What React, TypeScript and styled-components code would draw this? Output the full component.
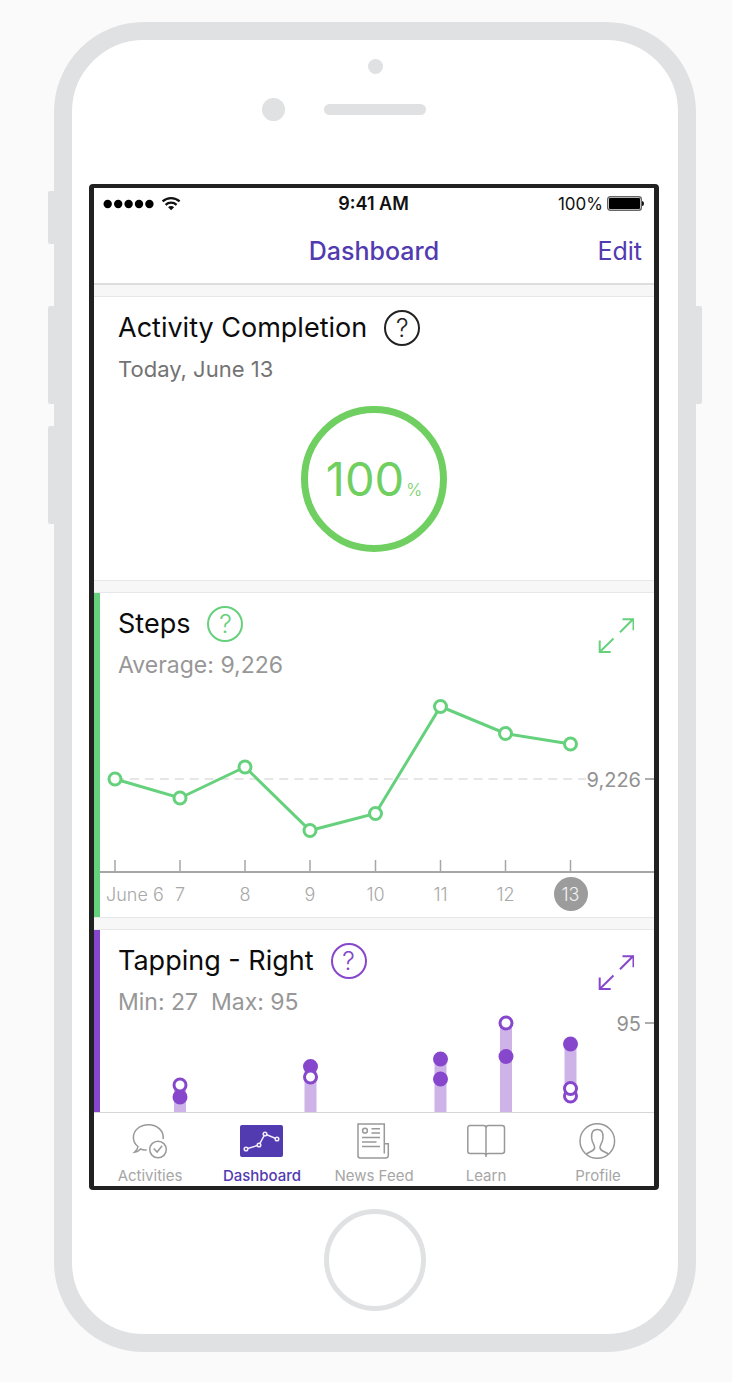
import React from "react";
import styled, { createGlobalStyle } from "styled-components";

const Global = createGlobalStyle`
  * { box-sizing: border-box; }
  body { margin: 0; background: #fafafa; font-family: Inter, "Liberation Sans", sans-serif; }
  h1, h2, p { margin: 0; font-weight: 400; }
  button { padding: 0; border: 0; background: none; font: inherit; color: inherit; cursor: pointer; }
  svg { display: block; }
`;

const shell = "#e0e1e3";
const violet = "#523bb0";
const green = "#66d17c";
const purple = "#8647cc";

const Stage = styled.main`
  display: flex;
  padding: 22px 30px 30px 48px;
`;

const Rail = styled.div`
  width: 6px;
  flex: none;
  display: flex;
  flex-direction: column;
`;

const SideKey = styled.span<{ $gap: number; $size: number; $right?: boolean }>`
  height: ${(p) => p.$size}px;
  margin-top: ${(p) => p.$gap}px;
  background: ${shell};
  border-radius: ${(p) => (p.$right ? "0 2px 2px 0" : "2px 0 0 2px")};
`;

const Body = styled.div`
  flex: 1;
  min-width: 0;
  display: flex;
  flex-direction: column;
  padding-bottom: 23px;
  border: 18px solid ${shell};
  border-radius: 90px;
  background: #fff;
`;

const Earpiece = styled.div`
  height: 144px;
  padding-top: 19px;
  display: flex;
  flex-direction: column;
  align-items: center;
  gap: 24px;
`;

const Dot = styled.span<{ $size: number }>`
  width: ${(p) => p.$size}px;
  height: ${(p) => p.$size}px;
  border-radius: 50%;
  background: ${shell};
`;

const SpeakerRow = styled.div`
  width: 100%;
  display: grid;
  grid-template-columns: 1fr 102px 1fr;
  align-items: center;
`;

const CameraSlot = styled.div`
  display: flex;
  justify-content: flex-end;
  padding-right: 39px;
`;

const Speaker = styled.span`
  height: 11px;
  border-radius: 6px;
  background: ${shell};
`;

const Screen = styled.div`
  display: flex;
  flex-direction: column;
  margin: 0 19px 0 17px;
  border: solid #212121;
  border-width: 4px 5px;
  border-radius: 4px;
  background: #fff;
`;

const StatusBar = styled.div`
  height: 31px;
  display: grid;
  grid-template-columns: 1fr auto 1fr;
  align-items: center;
  padding: 0 10px 0 9px;
  font-size: 17px;
  color: #111;
`;

const Clock = styled.time`
  font-size: 18px;
  font-weight: 600;
`;

const Battery = styled.span`
  display: flex;
  align-items: center;
  justify-content: flex-end;
  gap: 4px;
`;

const NavBar = styled.header`
  height: 66px;
  display: grid;
  grid-template-columns: 1fr auto 1fr;
  align-items: center;
  padding: 0 12px;
  border-bottom: 2px solid #dedee0;
  color: ${violet};
  font-size: 25px;
`;

const NavTitle = styled.h1`
  grid-column: 2;
  font-size: 25px;
  font-weight: 500;
`;

const EditButton = styled.button`
  justify-self: end;
`;

const Feed = styled.div`
  display: flex;
  flex-direction: column;
  gap: 11px;
  padding-top: 11px;
  background: #f7f7f7;
`;

const Card = styled.section<{ $accent?: string; $last?: boolean }>`
  border-top: 1px solid #e7e7e8;
  border-bottom: ${(p) => (p.$last ? "0" : "1px solid #e7e7e8")};
  background-color: #fff;
  padding-left: ${(p) => (p.$accent ? 6 : 0)}px;
  background-image: ${(p) => (p.$accent ? `linear-gradient(${p.$accent}, ${p.$accent})` : "none")};
  background-size: 6px 100%;
  background-repeat: no-repeat;
`;

const CardHead = styled.div<{ $accent?: string }>`
  display: flex;
  justify-content: space-between;
  padding: 13px 20px 0 ${(p) => (p.$accent ? 18 : 24)}px;
  color: ${(p) => p.$accent || "#222"};
`;

const TitleRow = styled.div`
  display: flex;
  align-items: center;
  gap: 17px;
`;

const CardTitle = styled.h2`
  font-size: 27px;
  line-height: 36px;
  color: #0c0c0c;
`;

const HelpButton = styled.button`
  width: 36px;
  height: 36px;
  border: 2px solid currentColor;
  border-radius: 50%;
  font-size: 25px;
  font-weight: 300;
  line-height: 32px;
`;

const Caption = styled.p<{ $dark?: boolean }>`
  margin-top: 9px;
  font-size: ${(p) => (p.$dark ? 22 : 23)}px;
  line-height: 28px;
  white-space: pre;
  color: ${(p) => (p.$dark ? "#737373" : "#979797")};
`;

const ExpandButton = styled.button`
  width: 36px;
  height: 36px;
  margin-top: 11px;
`;

const RingArea = styled.div`
  display: flex;
  justify-content: center;
  padding: 23px 0 28px;
`;

const Ring = styled.div`
  width: 146px;
  height: 146px;
  display: flex;
  justify-content: center;
  align-items: baseline;
  gap: 2px;
  border: 7px solid #6fcf60;
  border-radius: 50%;
  color: #6fcf60;
  line-height: 132px;
`;

const RingValue = styled.span`
  font-size: 47px;
`;

const RingUnit = styled.span`
  font-size: 17px;
  font-weight: 300;
`;

const Chart = styled.svg`
  width: 100%;
  height: auto;
  overflow: visible;
`;

const ScaleText = styled.text`
  font-size: 20px;
  fill: #929292;
`;

const DayText = styled.text<{ $on?: boolean }>`
  font-size: 18px;
  font-weight: 300;
  fill: ${(p) => (p.$on ? "#f2f2f2" : "#a8a8a8")};
`;

const TabBar = styled.nav`
  display: grid;
  grid-template-columns: repeat(5, 1fr);
  height: 74px;
  border-top: 1px solid #d6d6d6;
  padding-top: 10px;
`;

const Tab = styled.button<{ $active?: boolean }>`
  display: flex;
  flex-direction: column;
  align-items: center;
  gap: 8px;
  font-size: 15px;
  line-height: 18px;
  font-weight: ${(p) => (p.$active ? 500 : 400)};
  color: ${(p) => (p.$active ? violet : "#a6a6a6")};
`;

const HomeArea = styled.div`
  display: flex;
  justify-content: center;
  padding-top: 19px;
`;

const HomeButton = styled.button`
  width: 102px;
  height: 102px;
  border: 5px solid ${shell};
  border-radius: 50%;
`;

const Signal = () => (
  <svg width="78" height="16" viewBox="0 0 78 16" role="img" aria-label="Signal">
    {[4.7, 15.2, 25.6, 36, 46.4].map((x) => (
      <circle key={x} cx={x} cy="8" r="4.2" fill="#000" />
    ))}
    <g fill="none" stroke="#111" strokeWidth="2.2">
      <path d="M59.600 5.400a12.500 12.500 0 0 1 17 0" />
      <path d="M62.600 8.900a8 8 0 0 1 11 0" />
    </g>
    <path d="M68.100 14.200l-3-3a4.200 4.200 0 0 1 6 0z" fill="#111" />
  </svg>
);

const BatteryIcon = () => (
  <svg width="37" height="15" viewBox="0 0 37 15" aria-hidden="true">
    <rect x="0.7" y="0.7" width="33.600" height="13.600" rx="2.500" fill="#fff" stroke="#666" strokeWidth="1.400" />
    <rect x="2" y="2" width="31" height="11" rx="1" fill="#000" />
    <path d="M35 5q2 0 2 2.500t-2 2.500z" fill="#111" />
  </svg>
);

const ExpandIcon = () => (
  <svg width="36" height="36" viewBox="0 0 36 36" fill="none" stroke="currentColor" strokeWidth="2" aria-hidden="true">
    <path d="M22 15.200L35.500 1.800M24.500 2.200h11v11M15.500 21.500L1.700 35M1.700 23.500v11.500h11" />
  </svg>
);

const ActivitiesIcon = () => (
  <svg width="44" height="36" viewBox="0 0 44 36" fill="none" stroke="#999" strokeWidth="1.500" aria-hidden="true">
    <path d="M35.200 16C36 8 29.500 1.700 20.500 1.700C11.500 1.700 5.400 7.500 5.400 14.500c0 4 1.800 7 4.600 9-.2 2-1.500 4-3.500 5.800 2.800-.3 4.600-1.600 6-3.300 2 .9 4 1.200 6.200.7" />
    <circle cx="30" cy="26.500" r="8.300" />
    <path d="M25.700 25.500l3.400 3.500 5-6.300" />
  </svg>
);

const DashboardIcon = () => (
  <svg width="44" height="36" viewBox="0 0 44 36" fill="none" stroke="#f0edfa" strokeWidth="1.500" aria-hidden="true">
    <rect x="0" y="2" width="43" height="32" rx="2" fill={violet} stroke="none" />
    <path d="M6 26L19 22 25 11 37 16" />
    <g fill={violet}>
      <circle cx="6" cy="26" r="1.800" />
      <circle cx="19" cy="22" r="1.800" />
      <circle cx="25" cy="11" r="1.800" />
      <circle cx="37" cy="16" r="1.800" />
    </g>
  </svg>
);

const NewsIcon = () => (
  <svg width="44" height="36" viewBox="0 0 44 36" fill="none" stroke="#999" strokeWidth="1.500" aria-hidden="true">
    <path d="M32.300 30.500V1H6v31.500c0 1.500.8 2.500 2.200 2.500h25.500c1.800 0 2.600-1 2.600-2.700V20.700h-4" />
    <circle cx="13" cy="7.700" r="2.400" />
    <path d="M19.500 5.700h8.500M19.500 9.900h8.500M10 14.400h18M10 18.900h14.500M10 23.400h18" />
  </svg>
);

const LearnIcon = () => (
  <svg width="44" height="36" viewBox="0 0 44 36" fill="none" stroke="#999" strokeWidth="1.500" aria-hidden="true">
    <path d="M22 34V5c0-1.500-1-2.500-2.500-2.500H6C4.500 2.500 3.800 3.500 3.800 5v23c0 1.500.7 2.500 2.200 2.500h13.500c1.500 0 2.500.5 2.500 2 0-1.500 1-2 2.500-2H38c1.500 0 2.500-1 2.500-2.500V5c0-1.500-1-2.500-2.500-2.500H24.500C23 2.500 22 3.500 22 5" />
  </svg>
);

const ProfileIcon = () => (
  <svg width="44" height="36" viewBox="0 0 44 36" fill="none" stroke="#999" strokeWidth="1.500" aria-hidden="true">
    <circle cx="21.300" cy="18" r="17.300" />
    <path d="M10 31.300c2.500-2.500 8-2.800 8.600-6.300.4-3-2.600-4.500-3-10.300C15.300 9 17 6.500 21.300 6.500s6 2.500 5.700 8.200c-.4 5.800-3.400 7.300-3 10.300.6 3.500 6.100 3.800 8.600 6.300" />
  </svg>
);

const steps = [
  [115, 779], [180, 798], [245, 767], [310, 830.5],
  [375.5, 813.5], [440.5, 706.5], [505.5, 733.5], [570.5, 744],
];

const days = ["June 6", "7", "8", "9", "10", "11", "12", "13"];

const StepsChart = () => (
  <Chart viewBox="100 679 554 238" role="img" aria-label="Steps per day">
    <path d="M115 779H586" stroke="#e6e6e6" strokeWidth="2" strokeDasharray="9 5.940" />
    <path d="M645 779H654" stroke="#adadad" strokeWidth="2" />
    <ScaleText x="641" y="787" textAnchor="end">9,226</ScaleText>
    <path d="M100 872H654" stroke="#a6a6a6" strokeWidth="2" />
    {steps.map(([x], i) => (
      <path key={i} d={`M${x} 860v11`} stroke="#a6a6a6" strokeWidth="1.500" />
    ))}
    <polyline points={steps.map((p) => p.join(",")).join(" ")} fill="none" stroke={green} strokeWidth="3" />
    {steps.map(([x, y], i) => (
      <circle key={i} cx={x} cy={y} r="6" fill="#fff" stroke={green} strokeWidth="3" />
    ))}
    <circle cx="571" cy="894" r="17" fill="#9c9c9c" />
    {days.map((d, i) => (
      <DayText key={d} $on={i === 7} x={i === 0 ? 106 : steps[i][0]} y="901" textAnchor={i === 0 ? "start" : "middle"}>
        {d}
      </DayText>
    ))}
  </Chart>
);

const bars = [
  { x: 180, top: 1085, bottom: 1112, dots: [[1097, 1], [1085, 0]] },
  { x: 310.5, top: 1066, bottom: 1112, dots: [[1066.5, 1], [1077, 0]] },
  { x: 440.5, top: 1058, bottom: 1112, dots: [[1059, 1], [1079, 1]] },
  { x: 506, top: 1023, bottom: 1112, dots: [[1023, 0], [1056.5, 1]] },
  { x: 570.5, top: 1044, bottom: 1096, dots: [[1044, 1], [1096, 0], [1088.5, 0]] },
];

const TappingChart = () => (
  <Chart viewBox="100 1016 554 96" role="img" aria-label="Tapping range per day">
    {bars.map((b) => (
      <g key={b.x}>
        <rect x={b.x - 6} y={b.top} width="12" height={b.bottom - b.top} fill="#ceb3e9" />
        {b.dots.map(([y, solid]) => (
          <circle key={y} cx={b.x} cy={y} r="6" fill={solid ? purple : "#fff"} stroke={purple} strokeWidth="3" />
        ))}
      </g>
    ))}
    <ScaleText x="641" y="1031" textAnchor="end">95</ScaleText>
    <path d="M645 1023H654" stroke="#adadad" strokeWidth="2" />
  </Chart>
);

const tabs = [
  { label: "Activities", Icon: ActivitiesIcon },
  { label: "Dashboard", Icon: DashboardIcon, active: true },
  { label: "News Feed", Icon: NewsIcon },
  { label: "Learn", Icon: LearnIcon },
  { label: "Profile", Icon: ProfileIcon },
];

type HeadingProps = { title: string; caption: string; accent?: string };

const Heading = ({ title, caption, accent }: HeadingProps) => (
  <CardHead $accent={accent}>
    <div>
      <TitleRow>
        <CardTitle>{title}</CardTitle>
        <HelpButton type="button" aria-label={`About ${title}`}>?</HelpButton>
      </TitleRow>
      <Caption $dark={!accent}>{caption}</Caption>
    </div>
    {accent && (
      <ExpandButton type="button" aria-label={`Expand ${title}`}>
        <ExpandIcon />
      </ExpandButton>
    )}
  </CardHead>
);

export default function App() {
  return (
    <>
      <Global />
      <Stage>
        <Rail>
          <SideKey $gap={169} $size={53} />
          <SideKey $gap={62} $size={98} />
          <SideKey $gap={22} $size={98} />
        </Rail>
        <Body>
          <Earpiece>
            <Dot $size={15} />
            <SpeakerRow>
              <CameraSlot>
                <Dot $size={23} />
              </CameraSlot>
              <Speaker />
            </SpeakerRow>
          </Earpiece>
          <Screen>
            <StatusBar>
              <Signal />
              <Clock>9:41 AM</Clock>
              <Battery>
                100%
                <BatteryIcon />
              </Battery>
            </StatusBar>
            <NavBar>
              <NavTitle>Dashboard</NavTitle>
              <EditButton type="button">Edit</EditButton>
            </NavBar>
            <Feed>
              <Card>
                <Heading title="Activity Completion" caption="Today, June 13" />
                <RingArea>
                  <Ring>
                    <RingValue>100</RingValue>
                    <RingUnit>%</RingUnit>
                  </Ring>
                </RingArea>
              </Card>
              <Card $accent={green}>
                <Heading title="Steps" caption="Average: 9,226" accent={green} />
                <StepsChart />
              </Card>
              <Card $accent={purple} $last>
                <Heading title="Tapping - Right" caption="Min: 27  Max: 95" accent={purple} />
                <TappingChart />
              </Card>
            </Feed>
            <TabBar>
              {tabs.map(({ label, Icon, active }) => (
                <Tab key={label} type="button" $active={active}>
                  <Icon />
                  {label}
                </Tab>
              ))}
            </TabBar>
          </Screen>
          <HomeArea>
            <HomeButton type="button" aria-label="Home" />
          </HomeArea>
        </Body>
        <Rail>
          <SideKey $gap={284} $size={98} $right />
        </Rail>
      </Stage>
    </>
  );
}
